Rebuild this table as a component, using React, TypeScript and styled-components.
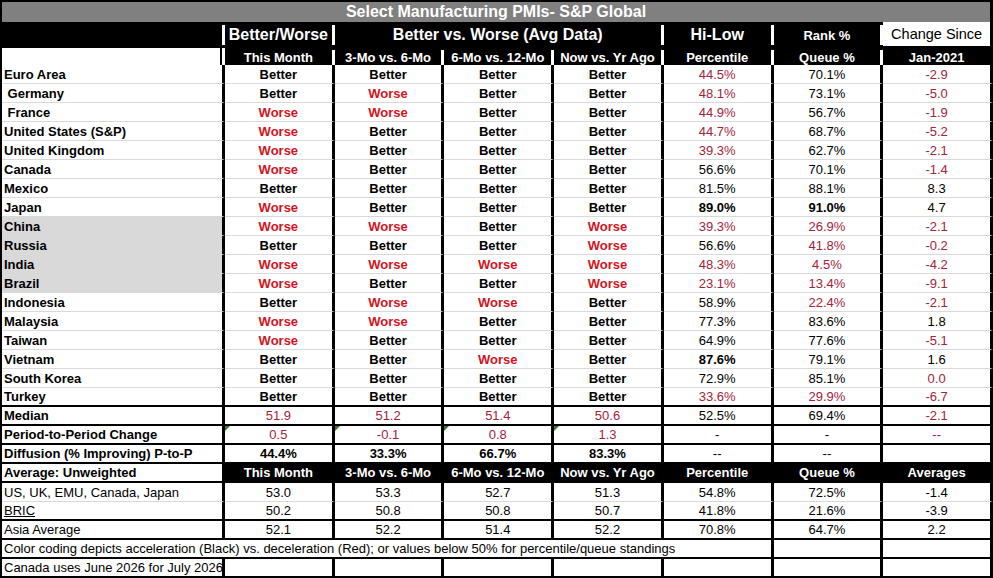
import styled, { createGlobalStyle, css } from "styled-components";

type Tone = "ink" | "worse" | "neg";
type Fill = "white" | "gray" | "black";
type Rule = "light" | "heavy" | "none";

interface Country {
  name: string;
  gray?: boolean;
  marks: string; // B = Better, W = Worse
  pct: number;
  queue: number;
  chg: number;
  strong?: "pct" | "both";
}

const countries: Country[] = [
  { name: "Euro Area", marks: "BBBB", pct: 44.5, queue: 70.1, chg: -2.9 },
  { name: " Germany", marks: "BWBB", pct: 48.1, queue: 73.1, chg: -5.0 },
  { name: " France", marks: "WWBB", pct: 44.9, queue: 56.7, chg: -1.9 },
  { name: "United States (S&P)", marks: "WBBB", pct: 44.7, queue: 68.7, chg: -5.2 },
  { name: "United Kingdom", marks: "WBBB", pct: 39.3, queue: 62.7, chg: -2.1 },
  { name: "Canada", marks: "WBBB", pct: 56.6, queue: 70.1, chg: -1.4 },
  { name: "Mexico", marks: "BBBB", pct: 81.5, queue: 88.1, chg: 8.3 },
  { name: "Japan", marks: "WBBB", pct: 89.0, queue: 91.0, chg: 4.7, strong: "both" },
  { name: "China", gray: true, marks: "WWBW", pct: 39.3, queue: 26.9, chg: -2.1 },
  { name: "Russia", gray: true, marks: "BBBW", pct: 56.6, queue: 41.8, chg: -0.2 },
  { name: "India", gray: true, marks: "WWWW", pct: 48.3, queue: 4.5, chg: -4.2 },
  { name: "Brazil", gray: true, marks: "WBBW", pct: 23.1, queue: 13.4, chg: -9.1 },
  { name: "Indonesia", marks: "BWWB", pct: 58.9, queue: 22.4, chg: -2.1 },
  { name: "Malaysia", marks: "WWBB", pct: 77.3, queue: 83.6, chg: 1.8 },
  { name: "Taiwan", marks: "WBBB", pct: 64.9, queue: 77.6, chg: -5.1 },
  { name: "Vietnam", marks: "BBWB", pct: 87.6, queue: 79.1, chg: 1.6, strong: "pct" },
  { name: "South Korea", marks: "BBBB", pct: 72.9, queue: 85.1, chg: 0.0 },
  { name: "Turkey", marks: "BBBB", pct: 33.6, queue: 29.9, chg: -6.7 },
];

const averages = [
  { name: "US, UK, EMU, Canada, Japan", values: ["53.0", "53.3", "52.7", "51.3", "54.8%", "72.5%", "-1.4"], rule: "light" as Rule },
  { name: "BRIC", underline: true, values: ["50.2", "50.8", "50.8", "50.7", "41.8%", "21.6%", "-3.9"], rule: "heavy" as Rule },
  { name: "Asia Average", values: ["52.1", "52.2", "51.4", "52.2", "70.8%", "64.7%", "2.2"], rule: "heavy" as Rule },
];

const periods = ["This Month", "3-Mo vs. 6-Mo", "6-Mo vs. 12-Mo", "Now vs. Yr Ago", "Percentile", "Queue %"];

const GRID = "223px repeat(7, 1fr)";

const GlobalStyle = createGlobalStyle`
  * { box-sizing: border-box; }
  body {
    margin: 0;
    background: #fff;
    font-family: "Liberation Sans", Arial, sans-serif;
  }
`;

const Sheet = styled.div`
  width: 993px;
  height: 578px;
  padding-left: 2px;
  background: #000;
  overflow: hidden;
`;

const TitleBar = styled.div`
  height: 22px;
  border-top: 2px solid #000;
  border-right: 3px solid #000;
  background: #808080;
  color: #fff;
  font-size: 16px;
  font-weight: 700;
  line-height: 20px;
  text-align: center;
`;

const HeadRow = styled.div<{ $h: number }>`
  display: grid;
  grid-template-columns: ${GRID};
  height: ${({ $h }) => $h}px;
  background: #000;
`;

const HeadCell = styled.div<{ $span?: number; $size?: number; $inset?: string; $light?: boolean; $edge?: boolean }>`
  grid-column: span ${({ $span }) => $span ?? 1};
  display: flex;
  align-items: center;
  justify-content: center;
  margin: ${({ $inset, $light }) => ($light ? 0 : $inset ?? "3px 0 1px")};
  border-right: 3px solid ${({ $light, $edge }) => ($light || $edge ? "#000" : "#fff")};
  background: ${({ $light }) => ($light ? "#fff" : "#000")};
  color: ${({ $light }) => ($light ? "#000" : "#fff")};
  font-size: ${({ $size }) => $size ?? 13}px;
  font-weight: ${({ $light }) => ($light ? 400 : 700)};
  white-space: nowrap;
`;

const BlankHead = styled.div`
  margin: 2px 0;
  border-right: 3px solid #fff;
  background: linear-gradient(to right, #fff calc(100% - 2px), #000 0);
`;

const Row = styled.div<{ $rule: Rule }>`
  display: grid;
  grid-template-columns: ${GRID};
  height: 19px;
  ${({ $rule }) =>
    $rule === "heavy"
      ? css`border-bottom: 2px solid #000;`
      : $rule === "light"
      ? css`& > * { border-bottom: 1px solid #d9d9d9; }`
      : ""}
`;

const tones: Record<Tone, string> = {
  ink: "#000",
  worse: "#d2141e",
  neg: "#a3233a",
};

const fills: Record<Fill, string> = {
  white: "#fff",
  gray: "#d9d9d9",
  black: "#000",
};

const Cell = styled.div<{
  $left?: boolean;
  $bold?: boolean;
  $tone?: Tone;
  $fill?: Fill;
  $span?: number;
  $flag?: boolean;
  $underline?: boolean;
}>`
  position: relative;
  grid-column: span ${({ $span }) => $span ?? 1};
  display: flex;
  align-items: center;
  justify-content: ${({ $left }) => ($left ? "flex-start" : "center")};
  padding-left: ${({ $left }) => ($left ? "2px" : "0")};
  border-right: 3px solid #000;
  background: ${({ $fill }) => fills[$fill ?? "white"]};
  color: ${({ $fill, $tone }) => ($fill === "black" ? "#fff" : tones[$tone ?? "ink"])};
  font-size: 13px;
  font-weight: ${({ $bold }) => ($bold ? 700 : 400)};
  text-decoration: ${({ $underline }) => ($underline ? "underline" : "none")};
  white-space: pre;

  ${({ $flag }) =>
    $flag &&
    css`
      &::before {
        content: "";
        position: absolute;
        top: 0;
        left: 0;
        border-top: 5px solid #3c7a2c;
        border-right: 5px solid transparent;
      }
    `}
`;

const toneOf = (v: number, limit: number): Tone => (v < limit ? "neg" : "ink");

const App = () => {
  return (
    <>
      <GlobalStyle />
      <Sheet>
        <TitleBar>Select Manufacturing PMIs- S&amp;P Global</TitleBar>

        <HeadRow $h={24}>
          <HeadCell />
          <HeadCell $size={16}>Better/Worse</HeadCell>
          <HeadCell $span={3} $size={16}>Better vs. Worse (Avg Data)</HeadCell>
          <HeadCell $size={16}>Hi-Low</HeadCell>
          <HeadCell>Rank %</HeadCell>
          <HeadCell $light $size={14.5}>Change Since</HeadCell>
        </HeadRow>

        <HeadRow $h={19}>
          <BlankHead />
          {periods.map((p) => (
            <HeadCell key={p} $inset="4px 0 5px">{p}</HeadCell>
          ))}
          <HeadCell $inset="4px 0 5px" $edge>Jan-2021</HeadCell>
        </HeadRow>

        {countries.map((c, i) => (
          <Row key={c.name} $rule={i === countries.length - 1 ? "heavy" : "light"}>
            <Cell $left $bold $fill={c.gray ? "gray" : "white"}>{c.name}</Cell>
            {c.marks.split("").map((m, j) => (
              <Cell key={j} $bold $tone={m === "W" ? "worse" : "ink"}>
                {m === "W" ? "Worse" : "Better"}
              </Cell>
            ))}
            <Cell $bold={!!c.strong} $tone={toneOf(c.pct, 50)}>{c.pct.toFixed(1)}%</Cell>
            <Cell $bold={c.strong === "both"} $tone={toneOf(c.queue, 50)}>{c.queue.toFixed(1)}%</Cell>
            <Cell $tone={c.chg <= 0 ? "neg" : "ink"}>{c.chg.toFixed(1)}</Cell>
          </Row>
        ))}

        <Row $rule="heavy">
          <Cell $left $bold>Median</Cell>
          <Cell $tone="neg">51.9</Cell>
          <Cell $tone="neg">51.2</Cell>
          <Cell $tone="neg">51.4</Cell>
          <Cell $tone="neg">50.6</Cell>
          <Cell>52.5%</Cell>
          <Cell>69.4%</Cell>
          <Cell $tone="neg">-2.1</Cell>
        </Row>

        <Row $rule="heavy">
          <Cell $left $bold>Period-to-Period Change</Cell>
          <Cell $flag $tone="neg">0.5</Cell>
          <Cell $flag $tone="neg">-0.1</Cell>
          <Cell $flag $tone="neg">0.8</Cell>
          <Cell $flag $tone="neg">1.3</Cell>
          <Cell>-</Cell>
          <Cell>-</Cell>
          <Cell $tone="neg">--</Cell>
        </Row>

        <Row $rule="heavy">
          <Cell $left $bold>Diffusion (% Improving) P-to-P</Cell>
          <Cell $bold>44.4%</Cell>
          <Cell $bold>33.3%</Cell>
          <Cell $bold>66.7%</Cell>
          <Cell $bold>83.3%</Cell>
          <Cell>--</Cell>
          <Cell>--</Cell>
          <Cell />
        </Row>

        <Row $rule="heavy">
          <Cell $left $bold>Average: Unweighted</Cell>
          {periods.map((p) => (
            <Cell key={p} $bold $fill="black">{p}</Cell>
          ))}
          <Cell $bold $fill="black">Averages</Cell>
        </Row>

        {averages.map((a) => (
          <Row key={a.name} $rule={a.rule}>
            <Cell $left $underline={a.underline}>{a.name}</Cell>
            {a.values.map((v, j) => (
              <Cell key={j}>{v}</Cell>
            ))}
          </Row>
        ))}

        <Row $rule="heavy">
          <Cell $left $span={6}>
            Color coding depicts acceleration (Black) vs. deceleration (Red); or values below 50% for percentile/queue standings
          </Cell>
          <Cell />
          <Cell />
        </Row>

        <Row $rule="heavy">
          <Cell $left>Canada uses June 2026 for July 2026</Cell>
          {Array.from({ length: 7 }, (_, j) => (
            <Cell key={j} />
          ))}
        </Row>
      </Sheet>
    </>
  );
};

export default App;
